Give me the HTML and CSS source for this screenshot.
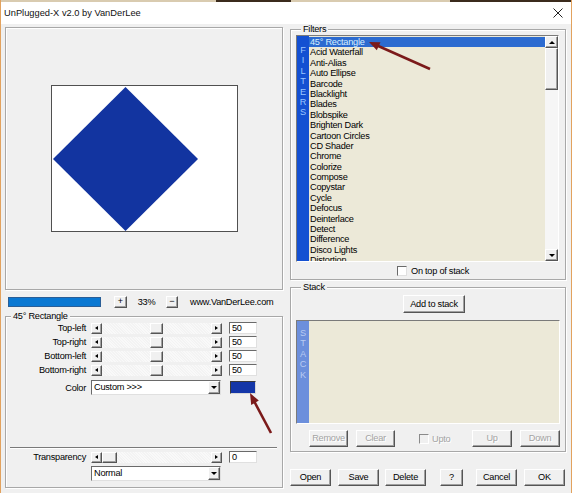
FILE: index.html
```html
<!DOCTYPE html>
<html>
<head>
<meta charset="utf-8">
<title>UnPlugged-X</title>
<link rel="stylesheet" href="styles.css">
</head>
<body>
<div class="window">
  <div class="topstrip"></div>
  <div class="titlebar">
    <span class="title">UnPlugged-X v2.0 by VanDerLee</span>
    <svg class="close" width="10" height="10" viewBox="0 0 10 10"><path d="M0.5 0.5 L9.5 9.5 M9.5 0.5 L0.5 9.5" stroke="#222" stroke-width="1" fill="none"/></svg>
  </div>
  <div class="main">
    <div class="leftcol">
      <div class="preview">
        <div class="canvas">
          <svg width="185" height="145" viewBox="0 0 185 145"><polygon points="73.5,1 146,73 73.5,145 1,73" fill="#1234a0"/></svg>
        </div>
      </div>
      <div class="zoomrow">
        <div class="zoombar"></div>
        <div class="btn3d zbtn">+</div>
        <div class="zpct">33%</div>
        <div class="btn3d zbtn minus">&minus;</div>
        <div class="url">www.VanDerLee.com</div>
      </div>
      <div class="group params">
        <div class="gtitle">45° Rectangle</div>
        <div class="prow first">
          <div class="plabel">Top-left</div>
          <div class="slider"><div class="btn3d sbtn tri-l"></div><div class="track"><div class="btn3d thumb" style="margin-left:48px"></div></div><div class="btn3d sbtn tri-r"></div></div>
          <div class="edit">50</div>
        </div>
        <div class="prow">
          <div class="plabel">Top-right</div>
          <div class="slider"><div class="btn3d sbtn tri-l"></div><div class="track"><div class="btn3d thumb" style="margin-left:48px"></div></div><div class="btn3d sbtn tri-r"></div></div>
          <div class="edit">50</div>
        </div>
        <div class="prow">
          <div class="plabel">Bottom-left</div>
          <div class="slider"><div class="btn3d sbtn tri-l"></div><div class="track"><div class="btn3d thumb" style="margin-left:48px"></div></div><div class="btn3d sbtn tri-r"></div></div>
          <div class="edit">50</div>
        </div>
        <div class="prow">
          <div class="plabel">Bottom-right</div>
          <div class="slider"><div class="btn3d sbtn tri-l"></div><div class="track"><div class="btn3d thumb" style="margin-left:48px"></div></div><div class="btn3d sbtn tri-r"></div></div>
          <div class="edit">50</div>
        </div>
        <div class="crow">
          <div class="plabel">Color</div>
          <div class="combo"><div class="combo-text">Custom &gt;&gt;&gt;</div><div class="btn3d combo-btn tri-d"></div></div>
          <div class="swatch"></div>
        </div>
        <div class="sep"></div>
        <div class="prow trow">
          <div class="plabel">Transparency</div>
          <div class="slider"><div class="btn3d sbtn tri-l"></div><div class="track"><div class="btn3d thumb wide" style="margin-left:0px"></div></div><div class="btn3d sbtn tri-r"></div></div>
          <div class="edit">0</div>
        </div>
        <div class="crow nrow">
          <div class="combo"><div class="combo-text">Normal</div><div class="btn3d combo-btn tri-d"></div></div>
        </div>
      </div>
    </div>
    <div class="rightcol">
      <div class="group filters">
        <div class="gtitle">Filters</div>
        <div class="listbox">
          <div class="strip"><span>F</span><span>I</span><span>L</span><span>T</span><span>E</span><span>R</span><span>S</span></div>
          <div class="items">
            <div class="item sel">45° Rectangle</div>
            <div class="item">Acid Waterfall</div>
            <div class="item">Anti-Alias</div>
            <div class="item">Auto Ellipse</div>
            <div class="item">Barcode</div>
            <div class="item">Blacklight</div>
            <div class="item">Blades</div>
            <div class="item">Blobspike</div>
            <div class="item">Brighten Dark</div>
            <div class="item">Cartoon Circles</div>
            <div class="item">CD Shader</div>
            <div class="item">Chrome</div>
            <div class="item">Colorize</div>
            <div class="item">Compose</div>
            <div class="item">Copystar</div>
            <div class="item">Cycle</div>
            <div class="item">Defocus</div>
            <div class="item">Deinterlace</div>
            <div class="item">Detect</div>
            <div class="item">Difference</div>
            <div class="item">Disco Lights</div>
            <div class="item">Distortion</div>
          </div>
          <div class="scrollbar">
            <div class="btn3d scbtn tri-u"></div>
            <div class="btn3d scthumb"></div>
            <div class="sctrack"></div>
            <div class="btn3d scbtn tri-d"></div>
          </div>
        </div>
        <div class="checkrow">
          <div class="checkbox"></div>
          <span>On top of stack</span>
        </div>
      </div>
      <div class="group stack">
        <div class="gtitle">Stack</div>
        <div class="btn3d button addbtn">Add to stack</div>
        <div class="stacklist">
          <div class="strip light"><span>S</span><span>T</span><span>A</span><span>C</span><span>K</span></div>
          <div class="stackbody"></div>
        </div>
        <div class="stackbtns">
          <div class="btn3d button dis b-remove">Remove</div>
          <div class="btn3d button dis b-clear">Clear</div>
          <div class="upto"><div class="checkbox dis"></div><span class="distext">Upto</span></div>
          <div class="btn3d button dis b-up">Up</div>
          <div class="btn3d button dis b-down">Down</div>
        </div>
      </div>
      <div class="bottombtns">
        <div class="btn3d button b-open">Open</div>
        <div class="btn3d button b-save">Save</div>
        <div class="btn3d button b-delete">Delete</div>
        <div class="btn3d button b-help">?</div>
        <div class="btn3d button b-cancel">Cancel</div>
        <div class="btn3d button b-ok">OK</div>
      </div>
    </div>
  </div>
  <svg class="arrows" width="572" height="493" viewBox="0 0 572 493">
    <line x1="430" y1="69" x2="376" y2="45" stroke="#7b1a1a" stroke-width="2.6"/>
    <polygon points="369,42 380.5,42.2 376.8,50.2" fill="#7b1a1a"/>
    <line x1="271" y1="433" x2="254" y2="401" stroke="#7b1a1a" stroke-width="2.6"/>
    <polygon points="250,393 258.8,400.6 251.2,405" fill="#7b1a1a"/>
  </svg>
</div>
</body>
</html>
```
FILE: styles.css
```css
* { box-sizing: border-box; }
body {
  margin: 0;
  font-family: "Liberation Sans", Arial, sans-serif;
  font-size: 9.2px;
  letter-spacing: -0.25px;
  color: #000;
  background: #f0f0f0;
}
.window {
  position: relative;
  width: 572px;
  height: 493px;
  background: #f0f0f0;
  border-left: 1px solid #e2a25e;
  border-right: 1px solid #e2a25e;
  overflow: hidden;
}
.topstrip {
  height: 2px;
  background: linear-gradient(to right, #d9cbb0 0 215px, #3b2b1d 215px 290px, #d9cbb0 290px 449px, #3b2b1d 449px);
}
.titlebar {
  height: 22px;
  background: #fff;
  display: flex;
  align-items: center;
  justify-content: space-between;
  padding: 0 8px 0 3px;
}
.title { font-size: 9.3px; letter-spacing: 0; color: #111; }
.main {
  display: flex;
  gap: 7px;
  padding: 3px 0 0 4px;
}
.leftcol { width: 278px; display: flex; flex-direction: column; }
.rightcol { width: 276px; display: flex; flex-direction: column; }

.btn3d {
  background: #f0f0f0;
  border: 1px solid;
  border-color: #fff #555 #555 #fff;
  box-shadow: inset -1px -1px 0 #a0a0a0;
}

/* preview */
.preview {
  height: 263px;
  border: 1px solid #a8a8a8;
  box-shadow: inset 1px 1px 0 #fff, 1px 1px 0 #fff;
  display: flex;
  align-items: center;
  justify-content: center;
}
.canvas {
  width: 187px;
  height: 147px;
  background: #fff;
  border: 1px solid #505050;
}
.canvas svg { display: block; }

.zoomrow {
  display: flex;
  align-items: center;
  height: 13px;
  margin-top: 5px;
  padding-left: 3px;
}
.zoombar {
  width: 93px;
  height: 10px;
  background: #0a78d2;
  border: 1px solid #2a5e96;
}
.zbtn {
  width: 13px;
  height: 12px;
  margin-left: 13px;
  display: flex;
  align-items: center;
  justify-content: center;
  font-size: 9px;
  line-height: 9px;
  letter-spacing: 0;
}
.zbtn.minus { margin-left: 0; width: 12px; }
.zpct { width: 39px; text-align: center; }
.url { margin-left: 12px; }

/* group boxes */
.group {
  border: 1px solid #a8a8a8;
  box-shadow: inset 1px 1px 0 #fff, 1px 1px 0 #fff;
}
.gtitle {
  display: table;
  margin: -6px 0 0 5px;
  padding: 0 2px;
  height: 10px;
  line-height: 10px;
  background: #f0f0f0;
}
.params {
  margin-top: 8px;
  padding-bottom: 6px;
}
.prow {
  display: flex;
  align-items: center;
  height: 12px;
  margin-top: 2px;
}
.prow.first { margin-top: 1px; }
.plabel {
  width: 85px;
  text-align: right;
  padding-right: 5px;
  white-space: nowrap;
}
.slider { width: 131px; height: 11px; display: flex; }
.sbtn {
  width: 11px;
  height: 11px;
  display: flex;
  align-items: center;
  justify-content: center;
}
.track {
  flex: 1;
  height: 11px;
  background-color: #f9f9f9;
  background-image: repeating-linear-gradient(45deg, #f3f3f3 0 1px, transparent 1px 2px);
  display: flex;
}
.thumb { width: 13px; height: 11px; }
.thumb.wide { width: 15px; }
.edit {
  width: 28px;
  height: 12px;
  margin-left: 7px;
  background: #fff;
  border: 1px solid;
  border-color: #6a6a6a #e0e0e0 #e0e0e0 #6a6a6a;
  padding-left: 2px;
  line-height: 10px;
}
.crow {
  display: flex;
  align-items: center;
  height: 15px;
  margin-top: 4px;
}
.combo {
  width: 130px;
  height: 15px;
  background: #fff;
  border: 1px solid;
  border-color: #6a6a6a #e0e0e0 #e0e0e0 #6a6a6a;
  display: flex;
}
.combo-text { flex: 1; padding-left: 2px; line-height: 13px; }
.combo-btn {
  width: 12px;
  height: 13px;
  display: flex;
  align-items: center;
  justify-content: center;
}
.swatch {
  width: 26px;
  height: 13px;
  margin-left: 9px;
  background: #1436a8;
  border: 1px solid;
  border-color: #3a3a3a #d8d8d8 #d8d8d8 #3a3a3a;
}
.sep {
  height: 2px;
  border-top: 1px solid #7a7a7a;
  border-bottom: 1px solid #fff;
  margin: 52px 5px 0 4px;
}
.trow { margin-top: 2px; }
.nrow { margin-top: 3px; padding-left: 85px; }

/* triangles */
.tri-l::before, .tri-r::before, .tri-u::before, .tri-d::before {
  content: "";
  display: block;
  width: 0;
  height: 0;
  border-style: solid;
}
.tri-l::before { border-width: 2.5px 3px 2.5px 0; border-color: transparent #000 transparent transparent; }
.tri-r::before { border-width: 2.5px 0 2.5px 3px; border-color: transparent transparent transparent #000; }
.tri-u::before { border-width: 0 3px 3px 3px; border-color: transparent transparent #000 transparent; }
.tri-d::before { border-width: 3px 3px 0 3px; border-color: #000 transparent transparent transparent; }

/* filters */
.filters {
  margin-top: 2px;
  padding: 0 6px 3px 5px;
}
.listbox {
  margin-top: 1px;
  width: 263px;
  height: 227px;
  display: flex;
  border: 1px solid;
  border-color: #7a7a7a #fff #fff #7a7a7a;
  background: #ece9d8;
}
.strip {
  width: 12px;
  background: #1450d2;
  color: #9cc6ff;
  display: flex;
  flex-direction: column;
  align-items: center;
  padding-top: 9px;
  line-height: 10.4px;
  letter-spacing: 0;
}
.strip.light { background: #6c8fdc; color: #b9cbf2; padding-top: 7px; }
.items {
  flex: 1;
  padding-top: 1px;
  overflow: hidden;
}
.item {
  height: 10.4px;
  line-height: 10.4px;
  padding-left: 1px;
  white-space: nowrap;
}
.item.sel { background: #2c6bd0; color: #d8f0ff; }
.scrollbar {
  width: 13px;
  display: flex;
  flex-direction: column;
  background: #f4f4f4;
}
.scbtn {
  height: 12px;
  display: flex;
  align-items: center;
  justify-content: center;
}
.scthumb { height: 42px; }
.sctrack { flex: 1; background: #f6f6f6; }
.checkrow {
  display: flex;
  align-items: center;
  height: 11px;
  margin-top: 3px;
  padding-left: 101px;
  gap: 4px;
}
.checkbox {
  width: 10px;
  height: 10px;
  background: #fff;
  border: 1px solid;
  border-color: #6a6a6a #e0e0e0 #e0e0e0 #6a6a6a;
}
.checkbox.dis { background: #f0f0f0; border-color: #8a8a8a #fff #fff #8a8a8a; }

/* stack */
.stack {
  margin-top: 7px;
  padding: 0 5px 4px 5px;
}
.button {
  height: 17px;
  display: flex;
  align-items: center;
  justify-content: center;
  line-height: 15px;
}
.addbtn {
  width: 62px;
  height: 18px;
  margin: 3px 0 0 107px;
}
.stacklist {
  margin-top: 7px;
  height: 104px;
  display: flex;
  border: 1px solid;
  border-color: #7a7a7a #fff #fff #7a7a7a;
  background: #ece9d8;
}
.stackbody { flex: 1; }
.stackbtns {
  display: flex;
  align-items: center;
  margin-top: 6px;
  height: 17px;
}
.dis { color: #a3a3a3; text-shadow: 1px 1px 0 #fff; }
.distext { color: #a3a3a3; text-shadow: 1px 1px 0 #fff; }
.b-remove { width: 39px; margin-left: 13px; }
.b-clear { width: 39px; margin-left: 8px; }
.upto { display: flex; align-items: center; gap: 3px; margin-left: 24px; }
.b-up { width: 40px; margin-left: auto; }
.b-down { width: 40px; margin-left: 8px; }

.bottombtns {
  display: flex;
  margin-top: 17px;
}
.b-open { width: 41px; }
.b-save { width: 41px; margin-left: 7px; }
.b-delete { width: 41px; margin-left: 6px; }
.b-help { width: 23px; margin-left: 14px; }
.b-cancel { width: 41px; margin-left: 13px; }
.b-ok { width: 41px; margin-left: 7px; }

.arrows {
  position: absolute;
  left: -1px;
  top: 0;
  pointer-events: none;
}
```
